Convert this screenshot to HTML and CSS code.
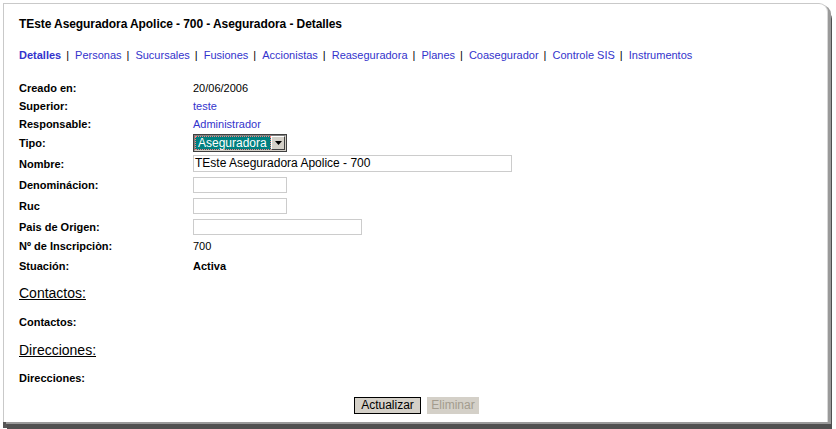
FILE: index.html
```html
<!DOCTYPE html>
<html>
<head>
<meta charset="utf-8">
<link rel="stylesheet" href="styles.css">
</head>
<body>
<div class="panel">
  <h1 class="title">TEste Aseguradora Apolice - 700 - Aseguradora - Detalles</h1>
  <nav class="tabs"><a class="tab active">Detalles</a><span class="sep">|</span><a class="tab">Personas</a><span class="sep">|</span><a class="tab">Sucursales</a><span class="sep">|</span><a class="tab">Fusiones</a><span class="sep">|</span><a class="tab">Accionistas</a><span class="sep">|</span><a class="tab">Reaseguradora</a><span class="sep">|</span><a class="tab">Planes</a><span class="sep">|</span><a class="tab">Coasegurador</a><span class="sep">|</span><a class="tab">Controle SIS</a><span class="sep">|</span><a class="tab">Instrumentos</a></nav>
  <div class="form">
    <div class="row h18"><span class="label">Creado en:</span><span class="value">20/06/2006</span></div>
    <div class="row h18"><span class="label">Superior:</span><span class="value link">teste</span></div>
    <div class="row h18"><span class="label">Responsable:</span><span class="value link">Administrador</span></div>
    <div class="row h20"><span class="label">Tipo:</span>
      <span class="select"><span class="sel-text">Aseguradora</span><span class="sel-btn"><svg width="7" height="4" viewBox="0 0 7 4"><path d="M0 0h7L3.5 4z" fill="#000"/></svg></span></span>
    </div>
    <div class="row h21"><span class="label">Nombre:</span><span class="input w319">TEste Aseguradora Apolice - 700</span></div>
    <div class="row h21"><span class="label">Denominácion:</span><span class="input w94"></span></div>
    <div class="row h21"><span class="label">Ruc</span><span class="input w94"></span></div>
    <div class="row h21"><span class="label">Pais de Origen:</span><span class="input w169"></span></div>
    <div class="row h18"><span class="label">Nº de Inscripciòn:</span><span class="value">700</span></div>
    <div class="row h21"><span class="label">Stuación:</span><span class="value bold">Activa</span></div>
  </div>
  <h2 class="section s1">Contactos:</h2>
  <div class="sublabel l1">Contactos:</div>
  <h2 class="section s2">Direcciones:</h2>
  <div class="sublabel l2">Direcciones:</div>
  <div class="buttons">
    <button class="btn primary">Actualizar</button>
    <button class="btn disabled">Eliminar</button>
  </div>
</div>
</body>
</html>
```
FILE: styles.css
```css
html, body {
  margin: 0;
  padding: 0;
  background: #ffffff;
}
body {
  font-family: "Liberation Sans", Arial, sans-serif;
  font-size: 11px;
  color: #000;
  width: 836px;
  height: 429px;
  overflow: hidden;
}
.panel {
  margin: 3px 0 0 3px;
  width: 825px;
  height: 419px;
  box-sizing: border-box;
  border-top: 1px solid #c9c9c9;
  border-left: 1px solid #c9c9c9;
  border-right: 1px solid #d8d8d8;
  border-top-right-radius: 9px;
  box-shadow: 3px 2px 0 #9a9a9a, 4px 7px 0 #505050, 0 6px 0 #555;
  padding: 12px 0 0 15px;
  background: #fff;
}
.title {
  margin: 0;
  font-size: 12px;
  line-height: 16px;
  height: 16px;
  font-weight: bold;
  letter-spacing: -0.08px;
}
.tabs {
  margin-top: 15px;
  height: 16px;
  line-height: 16px;
  font-size: 11px;
  white-space: nowrap;
}
.tab {
  color: #3333cc;
}
.tab.active {
  font-weight: bold;
}
.sep {
  margin: 0 6px 0 5px;
  color: #000;
}
.form {
  margin-top: 16px;
}
.row {
  display: flex;
  align-items: center;
}
.h18 { height: 18px; }
.h20 { height: 20px; }
.h21 { height: 21px; }
.label {
  width: 174px;
  font-weight: bold;
  flex: none;
}
.value.link { color: #3333cc; }
.value.bold { font-weight: bold; }
.select {
  display: flex;
  width: 94px;
  height: 18px;
  box-sizing: border-box;
  border: 2px solid;
  border-color: #808080 #d4d0c8 #d4d0c8 #808080;
  outline: 1px solid #404040;
  outline-offset: -1px;
  background: #fff;
}
.sel-text {
  flex: 1;
  background: #008080;
  color: #fff;
  font-size: 12px;
  line-height: 12px;
  padding: 0 2px;
  border: 1px dotted #ff8080;
}
.sel-btn {
  width: 14px;
  background: #d4d0c8;
  border: 1px solid;
  border-color: #fff #404040 #404040 #fff;
  box-sizing: border-box;
  display: flex;
  align-items: center;
  justify-content: center;
}
.input {
  display: block;
  height: 17px;
  box-sizing: border-box;
  border: 1px solid #cccccc;
  font-size: 12px;
  line-height: 15px;
  padding-left: 1px;
}
.w319 { width: 319px; }
.w94 { width: 94px; height: 16px; }
.w169 { width: 169px; height: 16px; }
.section {
  margin: 0;
  font-size: 14px;
  font-weight: normal;
  text-decoration: underline;
  line-height: 20px;
  height: 20px;
}
.s1 { margin-top: 7px; }
.s2 { margin-top: 9px; }
.sublabel {
  font-weight: bold;
  line-height: 18px;
  height: 18px;
}
.l1 { margin-top: 10px; }
.l2 { margin-top: 9px; }
.buttons {
  margin-top: 10px;
  display: flex;
  justify-content: center;
  gap: 6px;
  padding-right: 13px;
}
.btn {
  font-family: "Liberation Sans", Arial, sans-serif;
  font-size: 12px;
  height: 17px;
  padding: 0;
  margin: 0;
  background: #d4d0c8;
  box-sizing: border-box;
  line-height: 15px;
}
.btn.primary {
  width: 67px;
  border: 1px solid #000;
  color: #000;
}
.btn.disabled {
  width: 52px;
  border: 1px solid #d4d0c8;
  color: #a39c8e;
}
```
